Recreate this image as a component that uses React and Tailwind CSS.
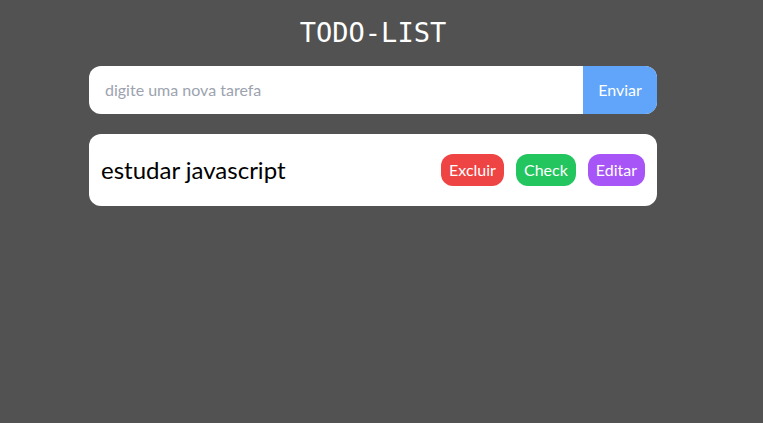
import React, { useState } from 'react';

const App = () => {
    const [tarefa, setTarefa] = useState('');
    const [tarefas] = useState(['estudar javascript']);

    return (
        <div className="min-h-screen bg-[#525252] font-['Lato',sans-serif] pt-[17px]">
            <div className="w-[746px]">
                <h1 className="text-center text-white text-[27px] leading-[32px] font-['DejaVu_Sans_Mono',monospace]">TODO-LIST</h1>

                <div className="w-[568px] mx-auto mt-[17px]">
                    {/* Input */}
                    <div className="flex h-12 bg-white rounded-xl overflow-hidden">
                        <input
                            value={tarefa}
                            onChange={(e) => setTarefa(e.target.value)}
                            placeholder="digite uma nova tarefa"
                            className="flex-1 pl-4 text-base text-black placeholder:text-[#9ca3af] outline-none"
                        />
                        <button className="w-[74px] bg-[#60a5fa] text-white text-base">Enviar</button>
                    </div>

                    {/* Lista */}
                    <div className="mt-5 flex flex-col gap-4">
                        {tarefas.map((t) => (
                            <div key={t} className="h-[72px] bg-white rounded-xl flex items-center justify-between pl-3 pr-3">
                                <span className="text-2xl text-black">{t}</span>
                                <div className="flex gap-3">
                                    <button className="h-8 px-2 rounded-xl bg-[#ef4444] text-white text-base">Excluir</button>
                                    <button className="h-8 px-2 rounded-xl bg-[#22c55e] text-white text-base">Check</button>
                                    <button className="h-8 px-2 rounded-xl bg-[#a855f7] text-white text-base">Editar</button>
                                </div>
                            </div>
                        ))}
                    </div>
                </div>
            </div>
        </div>
    );
};

export default App;
